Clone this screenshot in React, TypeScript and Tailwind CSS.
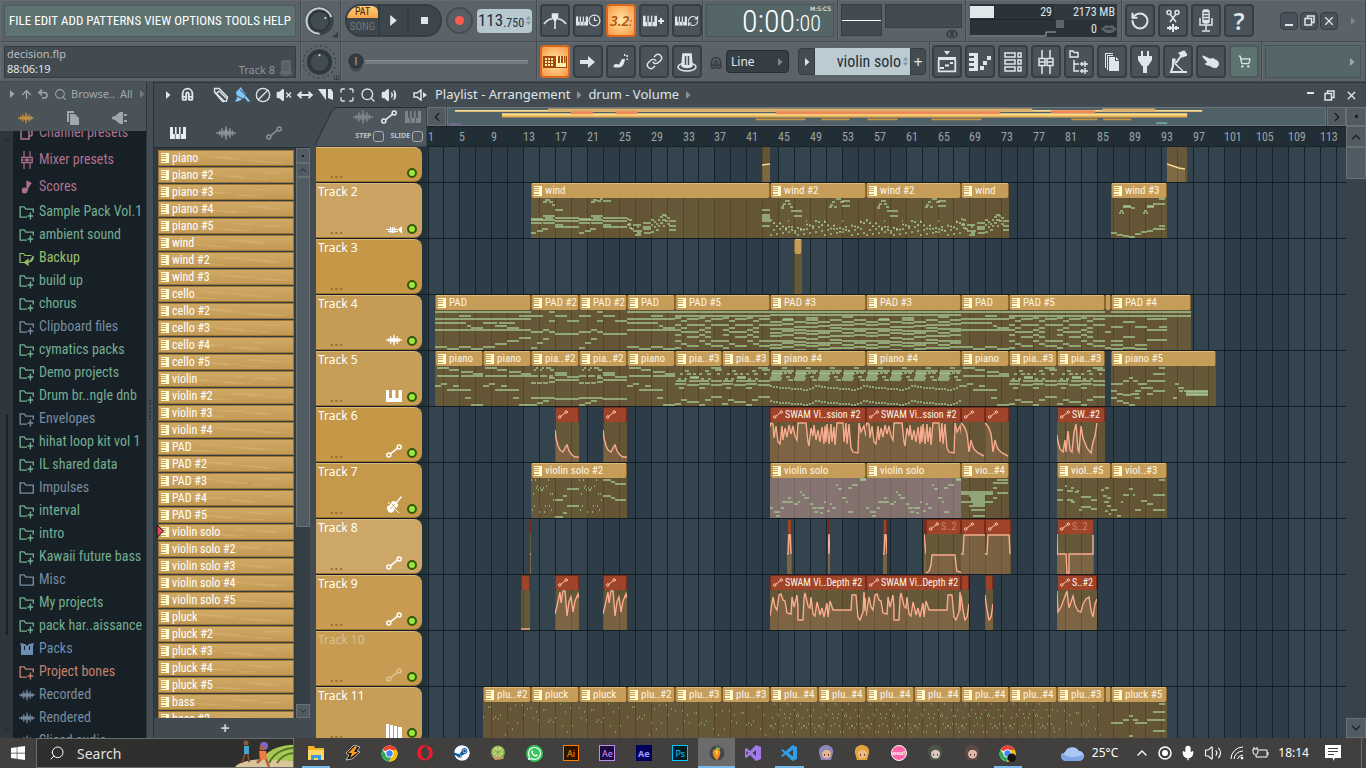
import React from "react";
import {
  Search, Magnet, Ban, Volume2, VolumeX, MoveHorizontal, Maximize, X, ChevronUp, ChevronDown, ChevronLeft, ChevronRight,
  ArrowUp, Undo2, Link, Mic, Eye, RotateCcw, ShoppingCart, Music2, RefreshCw, Clock3,
} from "lucide-react";
import { FaWindows, FaSteam, FaWhatsapp, FaOpera, FaHandPointRight } from "react-icons/fa";

const NARROW = "font-['Roboto_Condensed','Noto_Sans_Condensed','Open_Sans_Condensed',Lato,sans-serif]";

/* ---------- timeline scale ---------- */
const BAR = 255 / 32; // 32 bars are 255 px wide
const barX = (bar: number) => Math.floor(6 + (bar - 1) * BAR);

/* ---------- small drawings ---------- */
type P = { className?: string };

const Keys = ({ className = "w-4 h-3" }: P) => (
  <svg viewBox="0 0 16 12" className={className} fill="currentColor">
    <path d="M0 0H3V7H5V0H6.6V7H9V0H10.6V7H13V0H16V12H0Z" />
    <path d="M5.4 7V12M10.4 7V12" stroke="#3d464c" strokeWidth=".7" />
  </svg>
);
const Wave = ({ className = "w-5 h-3" }: P) => (
  <svg viewBox="0 0 20 14" className={className} fill="currentColor">
    <path d="M0 6.300h20v1.400H0z" />
    <path d="M2.500 7l1-2.500 1 2.500-1 2.500zM4.800 7l1.200-5 1.200 5L6 12zM7.200 7l.8-2.500.8 2.500-.8 2.500zM8.600 7L10 0l1.400 7L10 14zM11.200 7l.8-2.500.8 2.500-.8 2.500zM12.800 7L14 2l1.200 5L14 12zM15.500 7l1-2.500 1 2.500-1 2.500z" stroke="currentColor" strokeWidth=".6" />
  </svg>
);
const Auto = ({ className = "w-4 h-4" }: P) => (
  <svg viewBox="0 0 16 14" className={className} fill="none" stroke="currentColor" strokeWidth="1.5">
    <circle cx="2.8" cy="11" r="2" /><circle cx="13.2" cy="3" r="2" /><path d="M4.4 9.8L11.6 4.2" />
  </svg>
);
const RollIcon = ({ className = "w-2 h-2" }: P) => (
  <svg viewBox="0 0 8 10" className={className} shapeRendering="crispEdges" fill="#fffbd0">
    <path d="M0 0h8v10H0V9h5V8H0V6h5V5H0V4h5V3H0V2h5V1H0z" />
  </svg>
);
const Tri = ({ className = "" }: P) => (
  <svg viewBox="0 0 6 8" width="8" height="8" className={`shrink-0 ${className}`} fill="currentColor"><path d="M1 0l4.500 4L1 8z" /></svg>
);
const Spin = () => (
  <svg viewBox="0 0 5 9" className="ml-[2px] h-[9px] w-[5px] shrink-0" fill="#8296a0"><path d="M0 3.500L2.500 0 5 3.500zM0 5.500L2.500 9 5 5.500z" /></svg>
);
const FolderAdd = ({ plain }: { plain?: boolean }) => (
  <svg viewBox="0 0 14 14" className="h-4 w-4" fill="none" stroke="currentColor" strokeWidth="1.200">
    {plain ? <path d="M1 11.500V2.500h3.500l1.500 2h6.500v7z" /> : <path d="M7 11.500H1V2.500h3.500l1.500 2h6.500v3M10 7.500v6M7.500 10.500h5" />}
  </svg>
);
const MixerIcon = ({ className = "w-4 h-4" }: P) => (
  <svg viewBox="0 0 16 24" className={className} fill="none" stroke="currentColor" strokeWidth="1.500">
    <path d="M4 0v8M4 16v8M12 0v8M12 16v8M1 8.500h6v7H1zM9 8.500h6v7H9zM1 12h6M9 12h6" />
  </svg>
);
const Restore = () => (
  <svg viewBox="0 0 11 11" width="11" height="11" fill="none" stroke="currentColor" strokeWidth="1.500"><path d="M1 3.500h6.500V10H1zM3.500 3V1H10v6.500H8" /></svg>
);

/* ---------- top toolbar ---------- */
const btn = "flex h-[33px] w-[30px] shrink-0 items-center justify-center rounded-sm border-2";
function ToolButton({ label, lit, children }: { label: string; lit?: boolean; children: React.ReactNode }) {
  return (
    <button aria-label={label} className={`${btn} ${lit ? "border-[#d8681c] bg-radial from-[#ffe7a8] to-[#f7963f] text-[#b4550e]" : "border-[#363f46] bg-[#4a5359] text-[#dfe7ea]"}`}>
      {children}
    </button>
  );
}

function Knob({ ring }: { ring?: boolean }) {
  return (
    <svg viewBox="0 0 40 40" className="size-10" role="img" aria-label={ring ? "Main volume" : "Main pitch"}>
      {ring
        ? <><circle cx="19" cy="20" r="13.500" fill="#3a434a" stroke="#39424a" strokeWidth="2" /><path d="M19 33A13 13 0 1 1 31 16" fill="none" stroke="#c9d3d7" strokeWidth="2" /></>
        : <><circle cx="19" cy="20" r="16.500" fill="none" stroke="#353e44" strokeWidth="1.500" strokeDasharray="1.500 3.700" /><circle cx="19" cy="20" r="13" fill="#30393f" /></>}
      <circle cx="19" cy="20" r="10" fill="#414b52" stroke="#2c353b" strokeWidth="1.500" />
      <circle cx={ring ? 25 : 19} cy={ring ? 17 : 13} r="1" fill="#dfe7ea" />
      {ring ? <path d="M38 31v6h-6z" fill="#343c42" /> : <path d="M34 33v5h5M36.500 33v5M39 33v5" stroke="#343c42" fill="none" />}
    </svg>
  );
}

const cell = "flex items-center border-b border-r border-[#444d53] shadow-[inset_1px_1px_0_#646c72]";

function TopBar() {
  return (
    <header className="flex h-[82px] shrink-0 bg-[#5b6369] text-[#dfe7ea]">
      <div className="flex w-[301px] shrink-0 flex-col">
        <div className={`${cell} h-[42px] px-1`}>
          <nav className={`${NARROW} flex h-8 min-w-0 flex-1 items-center justify-between border border-[#4c5c5c] bg-[#5e7271] px-1 text-[13px] text-white`}>
            {["FILE", "EDIT", "ADD", "PATTERNS", "VIEW", "OPTIONS", "TOOLS", "HELP"].map((m) => <button key={m}>{m}</button>)}
          </nav>
        </div>
        <div className={`${cell} h-10 px-1`}>
          <div className="flex h-8 flex-1 items-center justify-between border border-[#343c43] bg-[#434b51] px-[2px] text-[11px] leading-[15px]">
            <div className="pb-[2px]"><div className="text-[#b6bdc0]">decision.flp</div><div>88:06:19</div></div>
            <div className="flex items-end self-end text-[#8d9599]">Track 8
              <svg viewBox="0 0 14 18" className="ml-1 h-[18px] w-[14px]"><ellipse cx="7" cy="14" rx="6.500" ry="3" fill="#5e666b" /><path d="M3 2h8v11H3z" fill="#596166" stroke="#6e767b" /></svg>
            </div>
          </div>
        </div>
      </div>
      <div className="flex w-10 shrink-0 flex-col">
        <div className={`${cell} h-[42px]`}><Knob ring /></div>
        <div className={`${cell} h-10`}><Knob /></div>
      </div>
      <div className="flex w-[196px] shrink-0 flex-col">
        <div className={`${cell} h-[42px] gap-1 pl-1`}>
          <div className="flex h-[33px] overflow-hidden rounded-l-2xl rounded-r-2xl border-2 border-[#353e45] bg-[#3d464c]">
            <div className={`${NARROW} flex w-[33px] flex-col border-r-2 border-[#343c43]`}>
              <button className="h-3 rounded-t-md bg-linear-to-b from-[#ffcf73] to-[#f9a548] text-[10px] leading-[12px] text-[#4a2305]">PAT</button>
              <button className="flex-1 text-[11px] leading-[16px] text-[#6d767b]">SONG</button>
            </div>
            <button aria-label="Play" className="flex w-[29px] items-center justify-center border-r-2 border-[#343c43]"><svg viewBox="0 0 6 10" width="7" height="11" fill="currentColor"><path d="M0 0l6 5-6 5z" /></svg></button>
            <button aria-label="Stop" className="flex w-[31px] items-center justify-center"><span className="size-[7px] bg-[#dfe7ea]" /></button>
          </div>
          <button aria-label="Record" className="flex size-[27px] items-center justify-center rounded-full border-2 border-[#444c52] bg-[#565e64]"><span className="size-[9px] rounded-full bg-[#ff5a50]" /></button>
          <div className={`${NARROW} flex h-6 w-[55px] items-center justify-center rounded-sm bg-[#b6c8d0] text-[17px] text-[#243038]`}>113<span className="pt-1 text-[12px]">.750</span><Spin /></div>
        </div>
        <div className={`${cell} relative h-10 px-2`}>
          <span className="ml-4 h-1 flex-1 border-t border-[#858d92] bg-[#747c81]" />
          <svg viewBox="0 0 16 20" className="absolute left-[7px] top-[11px] h-5 w-4" role="img" aria-label="Song position"><ellipse cx="8" cy="14" rx="6" ry="5" fill="#464e54" /><circle cx="8" cy="8" r="7" fill="#343c43" stroke="#252d33" /><path d="M8 4v8" stroke="#f7a55c" /></svg>
        </div>
      </div>
      <div className="flex min-w-0 flex-1 flex-col">
        <div className="flex h-[42px]">
          <div className={`${cell} w-[166px] shrink-0 gap-[3px] pl-[3px]`}>
            <ToolButton label="Metronome"><svg viewBox="0 0 24 18" className="h-[18px] w-6" fill="none" stroke="currentColor" strokeWidth="1.600"><path d="M1 12C4 8 7 7 9 7M15 7c2 0 5 1 8 5M12 3v14" /><path d="M9.500 2h5v4L12 8.500 9.500 6z" fill="currentColor" /></svg></ToolButton>
            <ToolButton label="Wait for input"><Keys className="h-3 w-3" /><Clock3 size={13} strokeWidth={2.200} /></ToolButton>
            <ToolButton label="Countdown" lit><span className="text-[14px] font-semibold italic">3.2<span className="text-[10px]">:</span></span></ToolButton>
            <ToolButton label="Overdub"><Keys className="h-3 w-[14px]" /><svg viewBox="0 0 8 8" width="8" height="8" stroke="currentColor" strokeWidth="2"><path d="M4 1v6M1 4h6" /></svg></ToolButton>
            <ToolButton label="Loop recording"><Keys className="h-3 w-3" /><RefreshCw size={12} strokeWidth={2.400} /></ToolButton>
          </div>
          <div className={`${cell} w-[135px] shrink-0 px-[3px]`}>
            <div className={`${NARROW} flex h-[33px] flex-1 items-center justify-end border border-[#465657] bg-[#546668] pr-[2px] text-white`}>
              <span className="text-[32px] font-light leading-8">0:00</span>
              <span className="flex flex-col"><span className="text-right font-['DejaVu_Sans'] text-[6px] leading-[7px]">M:S:CS</span><span className="pr-[10px] text-[22px] font-light leading-6">:00</span></span>
            </div>
          </div>
          <div className={`${cell} w-[128px] shrink-0 items-start gap-[3px] px-[3px] pt-1`}>
            <div className="flex h-8 w-[41px] items-center border border-[#363e45] bg-[#434b51]"><span className="h-px flex-1 bg-white" /></div>
            <div className="flex flex-1 flex-col items-end"><div className="h-6 w-full border border-[#363e45] bg-[#434b51]" /><Eye size={12} className="mr-1 text-[#343c42]" strokeWidth={3} /></div>
          </div>
          <div className={`${cell} w-[156px] shrink-0 px-1`}>
            <div className={`${NARROW} flex h-[33px] flex-1 flex-col bg-[#2b3238] text-[12px] leading-4`}>
              <div className="flex h-4 items-center border-b border-[#1f262b]"><span className="h-3 w-6 bg-[#dfe7ea]" /><span className="flex-1 pr-[2px] text-right">29</span><span className="w-[63px] bg-[#31383e] pr-[2px] text-right">2173 MB</span></div>
              <div className="flex flex-1 items-center">
                <svg viewBox="0 0 86 16" className="h-4 w-[86px]" fill="none"><path d="M0 15h76v-4h10" stroke="#a5adb1" /></svg>
                <span className="size-2 self-start bg-[#5c656b]" /><span className="flex-1 pr-1 text-right">0</span>
                <svg viewBox="0 0 16 10" className="h-[10px] w-4 fill-[#5c656b]"><path d="M0 5L5 1l3 1 3-1 5 4-5 4H5z" /><path d="M3 5c3-1.500 7-1.500 10 0-3 1-7 1-10 0z" fill="#2b3238" /></svg>
              </div>
            </div>
          </div>
          <div className={`${cell} min-w-0 flex-1 gap-[3px] pl-[3px]`}>
            <ToolButton label="Undo"><RotateCcw size={20} strokeWidth={2.400} /></ToolButton>
            <ToolButton label="Cut audio"><svg viewBox="0 0 16 24" className="h-6 w-4" fill="none" stroke="currentColor" strokeWidth="1.500"><circle cx="4" cy="3.500" r="2" /><circle cx="12" cy="3.500" r="2" /><path d="M5 5l6 8M11 5l-6 8" /><path d="M2 19h12M5 17v4M8 15v8M11 17v4" strokeWidth="2" /></svg></ToolButton>
            <ToolButton label="Record audio"><svg viewBox="0 0 14 24" className="h-6 w-[14px]" fill="none" stroke="currentColor" strokeWidth="1.500"><rect x="4" y="1" width="6" height="13" rx="2" fill="currentColor" /><path d="M4.500 4h5M4.500 7h5M4.500 10h5" stroke="#4a5359" /><path d="M1 9v7h12V9M7 16v5M3 22h8" /></svg></ToolButton>
            <ToolButton label="Help"><span className="text-[24px] font-semibold leading-none">?</span></ToolButton>
            <div className="flex-1" />
            <div className="flex shrink-0 gap-[2px]">
              {[<span key="m" className="mt-2 h-[2px] w-2 bg-current" />, <Restore key="r" />, <X key="x" size={14} />].map((c, i) => (
                <button key={i} aria-label={["Minimize", "Restore", "Close"][i]} className="flex size-[18px] items-center justify-center rounded-sm border border-[#363f46] bg-[#49525a]">{c}</button>
              ))}
            </div>
            <Tri className="ml-2 mr-2 text-[#7d868b]" />
          </div>
        </div>
        <div className="flex h-10">
          <div className={`${cell} w-[393px] shrink-0 gap-[3px] pl-[3px]`}>
            <ToolButton label="Typing keyboard" lit><svg viewBox="0 0 24 12" className="h-3 w-6"><path d="M0 0h12v12H0z" fill="#a14a0a" /><path d="M2 2h2v2H2zM5 2h2v2H5zM8 2h2v2H8zM2 5h2v2H2zM5 5h2v2H5zM8 5h2v2H8zM2 8h2v2H2zM5 8h2v2H5zM8 8h2v2H8z" fill="#ffe9a8" /><path d="M12 0h12v12H12z" fill="#a14a0a" /><path d="M13 0h2v7h2V0h1v7h2V0h1v7h1.500V0H23v11H13z" fill="#ffecae" /></svg></ToolButton>
            <ToolButton label="Step edit"><svg viewBox="0 0 16 12" className="h-3 w-4" fill="currentColor"><path d="M0 4h8V0l7 6-7 6V8H0z" /></svg></ToolButton>
            <ToolButton label="Note slide"><svg viewBox="0 0 16 16" className="h-4 w-4" fill="currentColor"><path d="M1 11c1-1.500 4-1 5-.5L9 5h3c-.5 4-2 8.500-6 8.500H2c-1.500 0-2-1.500-1-2.500zM11 0h1.500v2H11zM13.500 1H15v2h-1.500zM13.500 4.500H15v1.500h-1.500z" /></svg></ToolButton>
            <ToolButton label="Link"><Link size={17} /></ToolButton>
            <ToolButton label="Plugin"><svg viewBox="0 0 20 20" className="h-5 w-5" fill="none" stroke="currentColor" strokeWidth="1.500"><ellipse cx="10" cy="15" rx="9" ry="4" /><path d="M6 2h8l1 12c-2 2-8 2-10 0z" fill="currentColor" /><path d="M8.500 4v9M11.500 4v9" stroke="#4a5359" /></svg></ToolButton>
            <Magnet size={14} strokeWidth={3} className="mt-1 ml-1 shrink-0 rotate-[-45deg] text-[#384147]" />
            <button className="flex h-[23px] w-[63px] shrink-0 items-center justify-between rounded-sm border border-[#262e34] bg-[#363e45] px-1 text-[12px]">Line<Tri className="text-[#7d868b]" /></button>
            <div className="ml-[6px] flex h-[27px] items-stretch">
              <button aria-label="Pattern menu" className="flex w-[17px] items-center justify-center rounded-l-sm border border-[#343c43] bg-[#434c52]"><Tri /></button>
              <div className={`${NARROW} flex w-[95px] items-center justify-end whitespace-nowrap bg-[#bccbd2] pr-[2px] text-[16px] text-[#243038]`}>violin solo<Spin /></div>
              <button aria-label="Add pattern" className="flex w-4 items-center justify-center rounded-r-sm border border-[#343c43] bg-[#434c52] text-[16px] leading-none">+</button>
            </div>
          </div>
          <div className={`${cell} w-[332px] shrink-0 gap-[3px] pl-[2px]`}>
            <ToolButton label="Playlist"><svg viewBox="0 0 20 22" className="h-[22px] w-5" fill="currentColor"><path d="M7 0h6l-3 4zM1 6h18v3H1z" /><path d="M1.700 9v11.300h16.600V9M3 17h4M8 14.500h4M13 12h3" stroke="currentColor" strokeWidth="1.800" fill="none" /></svg></ToolButton>
            <ToolButton label="Piano roll"><svg viewBox="0 0 22 18" className="h-[18px] w-[22px]" fill="currentColor"><path d="M0 0h9v18H0v-3h5v-2H0v-3h5V8H0V5h5V3H0zM11 13h4v4h-4zM14 8h4v4h-4zM18 3h4v4h-4z" /></svg></ToolButton>
            <ToolButton label="Channel rack"><svg viewBox="0 0 18 20" className="h-5 w-[18px]" fill="none" stroke="currentColor" strokeWidth="1.500"><path d="M1 1h10v4H1zM1 8h10v4H1zM1 15h10v4H1zM14 1h3v4h-3zM14 8h3v4h-3zM14 15h3v4h-3z" /></svg></ToolButton>
            <ToolButton label="Mixer"><MixerIcon className="h-6 w-4" /></ToolButton>
            <ToolButton label="Browser"><svg viewBox="0 0 20 24" className="h-6 w-5" fill="none" stroke="currentColor" strokeWidth="1.500"><path d="M1 7V1h3l1 1.500h4V7zM5 10v11h5M5 14h5" /><path d="M11 14h8M13 12v4M16 11v6M11 21h8M13 19v4M16 18v6" /></svg></ToolButton>
            <ToolButton label="Project picker"><svg viewBox="0 0 14 18" className="h-[18px] w-[14px]" fill="currentColor"><path d="M0 0h8v1H1v14H0zM2 2h6v1H3v14H2zM4 4h6v4h4v10H4zM11 4l3 3h-3z" /></svg></ToolButton>
            <ToolButton label="Plugin picker"><svg viewBox="0 0 14 22" className="h-[22px] w-[14px]" fill="currentColor"><path d="M3 0h2v5h4V0h2v5h3v4l-4 6H9v7H5v-7H4L0 9V5h3z" /></svg></ToolButton>
            <ToolButton label="Performance"><svg viewBox="0 0 18 24" className="h-6 w-[18px]" fill="none" stroke="currentColor" strokeWidth="2"><path d="M4 10v6l-2 6h4M5 22h13M7 13l5-7" /><path d="M10 3l5-2 3 4-5 2zM3 9h3v5l8 7" fill="currentColor" strokeWidth="1.200" /></svg></ToolButton>
            <ToolButton label="Touch"><svg viewBox="0 0 20 16" width="18" height="15" fill="currentColor"><path d="M1 1l8 4 3-1 5 3c2 2 2 5 0 7-3 2-6 1-8-1l-5-1-.5-2L6 9 .5 3z" /><path d="M18 9c1 2 0 5-3 6" stroke="currentColor" fill="none" /></svg></ToolButton>
            <button aria-label="Shop" className="flex h-[33px] w-[30px] items-center justify-center rounded-sm border-2 border-[#4b5c5c] bg-[#5d7370]"><ShoppingCart size={13} strokeWidth={2.500} /></button>
          </div>
          <div className={`${cell} min-w-0 flex-1 pl-[3px] pr-1`}>
            <div className="flex h-[33px] flex-1 items-center justify-end border border-[#465657] bg-[#546668] pr-1"><Tri className="text-[#9eaaab]" /></div>
          </div>
        </div>
      </div>
    </header>
  );
}

/* ---------- browser ---------- */
const GREEN = "text-[#74ad92]", SLATE = "text-[#768ca0]", PINK = "text-[#b0718f]";
const browserItems: [string, string, string][] = [
  ["Sample Pack Vol.1", GREEN, "add"], ["ambient sound", GREEN, "add"], ["Backup", "text-[#98c06a]", "back"], ["build up", GREEN, "add"],
  ["chorus", GREEN, "add"], ["Clipboard files", SLATE, "add"], ["cymatics packs", GREEN, "add"], ["Demo projects", GREEN, "add"],
  ["Drum br..ngle dnb", GREEN, "add"], ["Envelopes", SLATE, "add"], ["hihat loop kit vol 1", GREEN, "add"], ["IL shared data", GREEN, "add"],
  ["Impulses", SLATE, "plain"], ["interval", GREEN, "add"], ["intro", GREEN, "add"], ["Kawaii future bass", GREEN, "add"], ["Misc", SLATE, "plain"],
  ["My projects", GREEN, "add"], ["pack har..aissance", GREEN, "add"], ["Packs", "text-[#6d8fb5]", "packs"], ["Project bones", "text-[#c4826c]", "add"],
  ["Recorded", SLATE, "wave"], ["Rendered", SLATE, "wave"], ["Sliced audio", SLATE, "wave"],
];

function BrowserIcon({ kind }: { kind: string }) {
  if (kind === "wave") return <Wave className="h-3 w-4" />;
  if (kind === "packs") return <svg viewBox="0 0 14 12" className="h-3 w-4" fill="currentColor"><path d="M0 0l5 1 2 2 2-2 5-1-1 3v9H1V3z" /><path d="M4.500 3v4M9.500 3v4" stroke="#172026" /></svg>;
  if (kind === "back") return <svg viewBox="0 0 16 14" className="h-4 w-4" fill="none" stroke="currentColor" strokeWidth="1.200"><path d="M5 11.500H1V2.500h3.500l1.500 2h6.500" /><path d="M14 5c1 4-2 6-5 6V8.500L5.500 11.500 9 14v-2" fill="currentColor" /></svg>;
  return <FolderAdd plain={kind === "plain"} />;
}

function Browser() {
  return (
    <aside className="flex w-[146px] shrink-0 flex-col overflow-hidden bg-[#2e373d]">
      <div className="h-[49px] shrink-0 bg-[#4a5358] text-[#a0a8ac]">
        <div className="flex h-6 items-center gap-[5px] pl-2 text-[11px]">
          <Tri /><ArrowUp size={13} strokeWidth={2.500} className="-mx-px" /><Undo2 size={12} strokeWidth={3} /><Search size={13} className="-mr-px" /><span>Browse..</span><span>All</span><Tri className="text-[#737b80]" />
        </div>
        <div className="flex h-6 items-center justify-between px-[18px]">
          <Wave className="h-3 w-4 text-[#c3923f]" />
          <svg viewBox="0 0 12 14" className="h-[14px] w-3" fill="currentColor"><path d="M0 0h7v2H2v9H0zM3 3h5l4 4v7H3z" /></svg>
          <svg viewBox="0 0 16 12" className="h-3 w-4" fill="currentColor"><path d="M0 5l3-1 5-4h3v12H8L3 8 0 7zM12 2h3v2h-3zM12 8h3v2h-3z" /></svg>
        </div>
      </div>
      <div className="flex min-h-0 flex-1 overflow-hidden">
        <div className="flex w-[13px] shrink-0 flex-col items-center justify-between py-1 text-[#161d22]"><ChevronUp size={10} /><span className="mt-[180px] h-[220px] w-[2px] bg-[#182027]" /><ChevronDown size={10} /></div>
        <ul className={`${NARROW} -mt-3 min-w-0 flex-1 whitespace-nowrap bg-[#172026] pl-[6px] text-[14px]`}>
          {([["Channel presets", 0], ["Mixer presets", 1], ["Scores", 2]] as [string, number][]).map(([t, k]) => (
            <li key={t} className={`flex h-[27px] items-center gap-1 ${PINK}`}>
              <span className="flex w-4 justify-center">{k === 0 ? <svg viewBox="0 0 14 14" className="h-[14px] w-[14px]" fill="none" stroke="currentColor" strokeWidth="1.500"><path d="M1 4h8v9H1zM4 4V1h8v8l-3 2" /></svg> : k === 1 ? <MixerIcon className="h-[18px] w-3" /> : <Music2 size={14} fill="currentColor" />}</span>{t}
            </li>
          ))}
          {browserItems.map(([t, c, k]) => (
            <li key={t} className={`flex h-[23px] items-center gap-1 ${c}`}><span className="flex w-4 shrink-0 justify-center"><BrowserIcon kind={k} /></span>{t}</li>
          ))}
        </ul>
      </div>
    </aside>
  );
}

/* ---------- pattern picker ---------- */
const group = (n: string, c: number) => Array.from({ length: c }, (_, i) => (i ? `${n} #${i + 1}` : n));
const patterns = [...group("piano", 5), ...group("wind", 3), ...group("cello", 5), ...group("violin", 4), ...group("PAD", 5), ...group("violin solo", 5), ...group("pluck", 5), ...group("bass", 2)];

function Picker() {
  return (
    <section className="flex w-[162px] shrink-0 flex-col bg-[#434b52]">
      <div className="flex h-10 shrink-0 items-center gap-[30px] pl-4 pt-3 text-[#8a9398]">
        <Keys className="h-3 w-4 text-[#e6eef2]" /><Wave className="h-[14px] w-5" /><Auto className="h-4 w-4" />
      </div>
      <div className="mr-[6px] flex min-h-0 flex-1 border-t border-[#252e35] bg-[#323b42]">
        <ul className="min-w-0 flex-1 overflow-hidden pl-1 pr-[2px] pt-[2px]">
          {patterns.map((p, i) => (
            <li key={p} className="relative mb-px flex h-4 items-center gap-[3px] border border-[#9c7637] bg-linear-to-b from-[#d0a966] to-[#c29a54] pl-[2px]">
              {p === "violin solo" && <svg viewBox="0 0 8 12" className="absolute -left-[3px] top-0 h-3 w-2"><path d="M1 0l6.500 6L1 12z" fill="#e8475d" stroke="#111" /></svg>}
              <RollIcon className="h-[10px] w-2" />
              <svg viewBox="0 0 120 12" preserveAspectRatio="none" className="absolute right-1 top-1 h-2 w-[118px] opacity-35" stroke="#e6c68a" strokeWidth="1.500" aria-hidden="true">
                <path d={Array.from({ length: 9 }, (_, k) => `M${20 + ((k * 37 + i * 13) % 80)} ${1 + ((k * 5 + i * 3) % 11)}h${6 + ((k * 7 + i) % 18)}`).join("")} />
              </svg>
              <span className={`${NARROW} relative text-[12px] leading-[14px] text-white`}>{p}</span>
            </li>
          ))}
        </ul>
        <div className="flex w-[14px] shrink-0 flex-col bg-[#363f46] text-[#171e24]">
          <span className="flex h-[15px] items-center justify-center border border-[#687077] bg-[#525b62]"><span className="size-[2px] bg-current" /></span>
          <button aria-label="Scroll patterns up" className="flex h-[14px] items-center justify-center border border-[#687077] bg-[#525b62]"><ChevronUp size={10} /></button>
          <span className="h-[350px] border border-[#687077] bg-[#525b62]" />
          <span className="flex-1" />
          <button aria-label="Scroll patterns down" className="flex h-[14px] items-center justify-center border border-[#687077] bg-[#525b62]"><ChevronDown size={10} /></button>
        </div>
      </div>
      <button aria-label="New pattern" className="h-5 shrink-0 pr-5 text-[16px] font-bold leading-5 text-[#c6ced2]">+</button>
    </section>
  );
}

/* ---------- note data: x,y,width in clip pixels ---------- */
type Note = [number, number, number];
const parse = (s: string): Note[] => s.split(" ").map((t) => t.split(",").map(Number) as Note);
const shift = (n: Note[], d: number) => n.map(([x, y, w]) => [x + d, y, w] as Note);
const tile = (n: Note[], step: number, c: number) => Array.from({ length: c }, (_, i) => shift(n, i * step)).flat();

const windHead = parse("0,21,12 0,25,11 12,18,12 14,20,8 12,25,12 0,22,24 24,20,24 24,27,8 24,23,24 24,29,24 11,31,6 6,33,6 0,35,5");
const windRun: Note[] = parse("0,21,2 2,22,3 1,26,3 0,27,4 2,30,3 4,31,3 6,27,8 6,33,9 8,37,6 10,29,2 10,35,4 16,25,8 16,29,8 16,31,8 17,35,7 24,22,3 24,27,2 24,34,3 27,29,2 27,24,2 29,26,2 29,32,3 31,22,2 31,28,2 33,19,3 33,25,3 35,17,4 35,22,4 36,28,2 38,18,2 38,23,3 40,20,3 40,26,3 42,23,7 42,28,7 42,32,7");
const zig: Note[] = Array.from({ length: 32 }, (_, i): Note[] => {
  const d = Math.abs((i % 16) - 8);
  return [[i * 3, 31 - (d * 9) / 8 + (i % 3) * 2, 2], [i * 3, 37 - ((i * 5) % 9), 2], ...(i % 6 === 0 ? [[i * 3, 23, 1] as Note] : [])];
}).flat();
const pad5 = tile(parse("0,8,6 6,11,6 12,9,12 24,8,6 30,11,6 36,9,12 0,15,6 12,15,12 24,15,6 36,15,12 6,18,6 30,18,6 0,20,6 24,20,6 6,22,18 30,22,6 0,25,6 30,27,6 24,25,6 12,27,12 0,31,6 24,31,6 36,31,12 6,34,6 12,36,12 30,34,6 36,36,12 0,38,6"), 48, 2).concat(parse("0,2,96 0,6,96"));
const pad3: Note[] = Array.from({ length: 8 }, (_, c) => [12, 15, 19, 23, 26, 31, 35, 38].map((y, k) => [c * 12, y - (c % 2) * 2 + ((c * k) % 3), 12] as Note)).flat().concat(parse("0,2,96 0,5,96 13,9,10 72,7,11 36,8,12"));
const wave4 = [0, 1, 1, 2, 2, 2, 2, 3, 3, 3, 3, 4, 4, 3, 2, 0];
const piano4: Note[] = tile(parse("2,5,22 12,2,5 1,7,11 2,8,11 1,10,10 0,12,12 0,14,11 14,7,3 18,7,4 16,11,4 18,14,5"), 24, 4)
  .concat(Array.from({ length: 32 }, (_, i): Note[] => [[i * 3, 20 + wave4[i % 16], 2], [i * 3, 35 + wave4[i % 16], 2]]).flat());
const pluckDots = (seed: number, dense: number): Note[] => Array.from({ length: dense }, (_, i) => [(i * 17 + seed * 7) % 46, 2 + ((i * i * 5 + i * 11 + seed * 3) % 34), 1] as Note);

const NOTES: Record<string, Note[]> = {
  wind: [...windHead, ...shift(windHead, 48), ...shift(windRun, 96), ...parse("12,4,4 14,2,5 18,4,4 21,7,3 24,12,8 60,4,4 62,2,4 66,3,4 69,1,3 72,3,8 231,12,8 231,17,8 231,19,8 231,21,8 231,23,8 231,28,8")],
  "wind #2": [...zig, ...parse("11,10,3 13,6,3 12,8,2 15,3,5 18,6,3 20,9,3 21,13,11 24,18,8 59,9,3 60,7,3 62,4,3 66,1,5 64,9,3 70,4,4 72,3,8 72,8,8")],
  windEnd: windRun,
  "wind #3": parse("12,8,8 12,9,8 20,10,4 36,8,7 36,9,7 42,6,12 48,1,6 8,15,2 9,13,3 11,15,2 32,15,2 33,13,3 35,15,2 0,35,6 6,37,6 12,38,6 18,39,6 24,36,6 30,34,6 36,33,6 42,31,12 48,28,6"),
  PAD: parse("0,2,96 24,6,12 84,6,12 0,9,96 0,13,31 48,13,14 64,13,16 32,16,4 60,16,12 36,18,12 72,18,12 0,20,96 84,28,12 72,31,12 60,34,12 0,37,12 24,37,12 48,37,12 12,39,12 36,39,12"),
  padShort: parse("0,2,48 24,6,12 0,9,48 0,13,31 32,16,4 36,18,12 0,20,48 0,37,12 24,37,12 12,39,12 36,39,12"),
  "PAD #2": parse("0,6,12 18,2,6 24,6,12 18,11,6 36,11,12 0,22,12 12,20,6 18,22,6 24,24,24 12,29,6 6,33,6 0,38,6"),
  "PAD #5": pad5,
  "PAD #3": pad3,
  "PAD #4": parse("0,2,80 0,6,80 36,9,20 12,12,12 0,17,12 24,17,12 48,17,8 36,20,20 12,27,12 0,31,12 36,30,20 0,35,12 24,35,12 0,39,12 12,38,12 24,39,12"),
  piano: parse("2,2,12 14,4,10 26,6,12 38,8,10 2,10,22 26,10,22 6,18,6 0,20,6 18,20,6 12,24,12 24,24,12 30,32,6 36,39,12"),
  "piano #2": parse("3,4,2 5,2,2 9,4,2 11,2,2 15,2,5 19,4,4 0,10,7 9,10,7 18,10,4 24,7,12 24,9,12 36,11,12 18,12,6 24,14,24 0,17,5 6,17,5 12,17,5 18,16,6 0,32,24 24,33,24 12,35,6 6,37,6 0,39,6"),
  "piano #3": parse("36,2,10 40,4,8 10,5,4 30,5,4 5,8,3 12,8,4 18,8,3 24,8,3 32,8,4 42,8,3 15,11,9 15,12,9 3,13,3 9,13,3 26,13,3 33,13,3 1,15,10 14,15,10 24,15,10 36,15,12 0,18,11 12,19,12 24,18,11 36,19,12 4,22,5 24,22,6 36,31,12 6,34,6 12,36,12 30,34,6 0,38,6 24,39,6"),
  "piano #4": piano4,
  "piano #5": parse("18,12,4 12,15,6 22,15,5 0,18,12 27,18,9 36,15,18 42,8,12 48,2,6 30,22,12 0,25,6 6,28,6 12,29,8 20,28,8 24,25,6 42,25,12 36,28,6 0,32,6 6,35,6 12,37,6 18,39,6 24,32,5 64,18,4 67,22,6 68,25,4 73,25,24 75,26,22 75,28,22 75,29,22 62,32,4"),
  "violin solo": parse("0,30,3 4,34,6 6,38,4 11,30,3 12,24,5 18,20,3 17,24,6 24,26,4 30,14,2 32,17,3 34,20,5 28,24,2 40,26,3 42,30,5 44,34,4 48,30,6 50,35,3 54,24,2 57,33,3 60,26,2 62,30,4 66,7,2 68,11,4 72,20,4 76,24,2 78,10,4 82,7,6 78,34,5 90,1,6 90,2,6"),
  "violin solo #2": [...Array.from({ length: 22 }, (_, i) => [((i * 7) % 23), 2 + ((i * i * 3 + i * 7) % 34), 1] as Note), ...Array.from({ length: 22 }, (_, i) => [48 + ((i * 7) % 23), 2 + ((i * i * 3 + i * 7) % 34), 1] as Note), ...parse("24,22,8 32,18,4 36,11,12 24,39,8 32,35,4 36,28,12 72,2,8 80,4,4 84,6,11 72,18,8 80,20,4 84,22,11")],
  "violin solo #4": parse("0,14,32 0,16,32 8,18,16 10,20,14 10,22,14 0,24,32 12,26,12 8,28,16 10,32,14 12,38,12 32,10,4 36,2,11 32,5,15 36,15,11 32,20,4"),
  "violin solo #5": parse("0,12,6 8,8,2 10,13,6 14,10,3 18,14,3 0,22,6 10,22,6 14,24,4 20,13,2 24,19,10 34,22,6 24,29,10 34,31,6 22,32,3 44,12,3 48,10,4 46,18,4 50,20,4 47,24,5 50,28,4 48,33,3 52,36,2"),
  "violin solo #3": parse("18,11,4 12,17,6 22,17,2 42,17,12 30,23,6 36,26,6 10,24,2 0,32,6 24,32,6 42,32,12 6,38,4 48,2,6"),
  "pluck #5": parse("48,2,6 42,10,12 18,14,4 12,18,6 22,18,5 0,21,12 24,21,12 36,18,18 42,29,12 18,34,4"),
};

/* ---------- curves ---------- */
const EXPR = "0,5 1,1 3,2 4,16 6,4 8,20 10,22 12,4 13,18 15,6 17,15 19,3 21,12 23,4 25,14 27,18 28,1 36,1 38,20 39,24 41,6 43,14 44,3 46,18 48,8 50,20 52,5 54,22 55,4 56,20 57,2 59,22 61,2 62,20 64,5 65,23 67,1 73,1 74,20 76,1 77,22 79,2 81,26 83,30 88,31 89,1 91,10 94,4 96,14";
const DEPTH = "0,26 3,7 5,17 7,20 9,5 11,4 13,10 15,11 17,23 21,24 22,7 24,17 27,5 28,17 28,30 33,30 34,8 35,3 38,16 40,18 41,7 43,24 45,26 47,12 49,20 50,25 52,18 54,27 57,13 58,27 60,11 63,20 81,20 82,5 86,5 88,27 90,30 93,22 94,2 95,21 96,8";
const FALL = "0,8 1,16 3,24 5,28 8,30 11,24 12,23 14,29 17,33 20,35 24,35";
const DROP = "0,1 2,3 4,6 6,12 7,20 8,30 10,18 11,22 13,27 17,31 23,34";
const BUZZ = "0,24 2,16 5,2 6,13 8,1 10,1 11,13 12,26 14,12 16,7 17,14 18,22 20,11 23,4 24,8";

type Kind = "gold" | "red" | "plain" | "sel";
type ClipData = { from: number; to: number; name?: string; notes?: string; kind?: Kind; curve?: string; dim?: boolean; dots?: number };

function Clip({ c, h = 40 }: { c: ClipData; h?: number }) {
  const left = barX(c.from), width = Math.max(1, barX(c.to) - left);
  const kind = c.kind ?? "gold";
  const red = kind === "red";
  const notes = c.dots !== undefined ? pluckDots(c.dots, c.name?.includes("#4") ? 40 : 16) : NOTES[c.notes ?? c.name ?? ""];
  return (
    <div className="absolute top-0 flex h-full flex-col overflow-hidden" style={{ left, width }}>
      {kind !== "plain" && (
        <div className={`flex h-[15px] shrink-0 items-center overflow-hidden rounded-xs border-x border-t pb-px ${width > 12 ? "pl-[2px]" : ""} ${red ? "gap-[2px] border-[#7a2c19] bg-[#9f442a] text-[10px]" : "gap-[3px] border-[#8a672e] border-t-[#e3b873] bg-[#c59d58] text-[11px]"}`}>
          {width > 12 && (red
            ? <Auto className="h-[9px] w-[10px] shrink-0 text-[#ffd3bd]" />
            : <RollIcon className="h-[10px] w-2 shrink-0" />)}
          {c.name && <span className={`${NARROW} whitespace-nowrap leading-[13px] ${c.dim ? "text-[#c78972]" : "text-[#fdf4e4]"}`}>{c.name}</span>}
        </div>
      )}
      <svg viewBox={`0 0 ${width} ${h}`} preserveAspectRatio="none" className={`w-full flex-1 ${kind === "sel" ? "bg-[#bd9588]/60" : "bg-[#b57b1e]/40"}`} aria-hidden="true">
        {notes && <path d={notes.map(([x, y, w]) => `M${x} ${y}h${w}`).join("")} stroke={c.dots !== undefined ? "#8ea274" : "#a3c08d"} strokeWidth={c.dots !== undefined ? 1.5 : 1.6} fill="none" />}
        {c.curve && <>
          <polygon points={`0,${h} ${c.curve} ${c.curve.split(" ").pop()!.split(",")[0]},${h}`} fill={red ? "#f0a080" : "#ffd080"} opacity=".16" />
          <polyline points={c.curve} fill="none" stroke={red ? "#f9ab8d" : "#ffd694"} strokeWidth="1.4" />
        </>}
      </svg>
    </div>
  );
}

const run = (name: string, edges: number[], extra: Partial<ClipData> = {}): ClipData[] => edges.slice(1).map((to, i) => ({ from: edges[i], to, name, ...extra }));
const pia = (label: string, notes: string, edges: number[]) => run(label, edges, { notes });
const red = (from: number, to: number, curve: string, name?: string, dim?: boolean): ClipData => ({ from, to, curve, name, dim, kind: "red" });

type Track = { name: string; icon?: "wind" | "wave" | "keys" | "auto" | "violin" | "pluck"; tone: string; off?: boolean; clips: ClipData[] };
const tracks: Track[] = [
  { name: "Track 2", icon: "wind", tone: "bg-[#cba362]", clips: [
    ...run("wind", [14, 44]), ...run("wind #2", [44, 56, 68]), ...run("wind", [68, 74], { notes: "windEnd" }), { from: 86.75, to: 93.75, name: "wind #3" }] },
  { name: "Track 3", tone: "bg-[#c59848]", clips: [{ from: 47, to: 48 }] },
  { name: "Track 4", icon: "wave", tone: "bg-[#c49c56]", clips: [
    ...run("PAD", [2, 14]), ...run("PAD #2", [14, 20, 26]), ...run("PAD", [26, 32], { notes: "padShort" }), ...run("PAD #5", [32, 44]), ...run("PAD #3", [44, 56, 68]),
    ...run("PAD", [68, 74], { notes: "padShort" }), ...run("PAD #5", [74, 86]), { from: 86, to: 86.75, notes: "PAD #2" }, ...run("PAD #4", [86.75, 96.75])] },
  { name: "Track 5", icon: "keys", tone: "bg-[#c79e58]", clips: [
    ...run("piano", [2, 8, 14]), ...pia("pia..#2", "piano #2", [14, 20, 26]), ...run("piano", [26, 32]), ...pia("pia..#3", "piano #3", [32, 38, 44]),
    ...run("piano #4", [44, 56, 68]), ...run("piano", [68, 74]), ...pia("pia..#3", "piano #3", [74, 80, 86]), ...run("piano #5", [86.75, 100])] },
  { name: "Track 6", icon: "auto", tone: "bg-[#c59848]", clips: [
    red(17, 20, FALL), red(23, 26, FALL), red(44, 56, EXPR, "SWAM Vi..ssion #2"), red(56, 68, EXPR, "SWAM Vi..ssion #2"), red(68, 71, DROP), red(71, 74, DROP),
    red(80, 86, "0,13 1,20 3,27 6,30 8,18 9,30 11,9 13,28 15,30 17,10 19,2 21,28 22,30 24,4 26,16 30,26 34,31 36,20 38,14 40,1", "SW..#2")] },
  { name: "Track 7", icon: "violin", tone: "bg-[#c5994c]", clips: [
    ...run("violin solo #2", [14, 26]), ...run("violin solo", [44, 56, 68], { kind: "sel" }), ...pia("vio..#4", "violin solo #4", [68, 74]),
    ...pia("viol..#5", "violin solo #5", [80, 86.75]), ...pia("viol..#3", "violin solo #3", [86.75, 93.75])] },
  { name: "Track 8", icon: "auto", tone: "bg-[#cda768]", clips: [
    red(13.8, 13.9, "0,20 1,20"), red(46.1, 46.7, "0,20 1,20 2,0 3,0 4,20"), red(51.25, 51.5, "0,20 1,0 2,20"), red(58.2, 58.7, "0,20 1,20 2,0 3,0 4,20"), red(63.25, 63.5, "0,0 2,20"),
    red(63.5, 68, "0,39 3,37 5,31 6,21 29,21 30,31 31,37 36,39", "S..2", true), red(68, 71, "0,20 2,20 3,1 24,1"), red(71, 74.25, "0,20 2,20 3,1 24,1 25,20"),
    red(80, 84.6, "0,0 0.500,20 9,20 10,39 12,39 12,20 36,20 36,1", "S..2", true)] },
  { name: "Track 9", icon: "auto", tone: "bg-[#c79c52]", clips: [
    red(12.75, 13.9, "0,39 9,39"), red(17, 20, BUZZ), red(23, 26, BUZZ), red(44, 56, DEPTH, "SWAM Vi..Depth #2"), red(56, 68, DEPTH, "SWAM Vi..Depth #2"),
    red(68, 69, "0,5 2,20 4,30 6,27 8,14"), red(71, 72, "0,5 2,20 4,30 6,27 8,14"), red(80, 85, "0,1 1,22 4,17 7,9 10,1 12,18 16,6 18,15 21,21 24,22 26,14 29,9 32,7 34,20 36,27 38,14 40,9", "S..#2")] },
  { name: "Track 10", icon: "auto", tone: "bg-[#c79c52]", off: true, clips: [] },
  { name: "Track 11", icon: "pluck", tone: "bg-[#c79e58]", clips: [
    ...run("plu..#2", [8, 14], { dots: 1 }), ...run("pluck", [14, 20, 26], { dots: 2 }), ...run("plu..#2", [26, 32], { dots: 1 }), ...run("plu..#3", [32, 38, 44], { dots: 3 }),
    ...run("plu..#4", [44, 50, 56, 62, 68, 74, 80], { dots: 4 }), ...run("plu..#3", [80, 86], { dots: 3 }), { from: 86, to: 86.75 }, ...run("pluck #5", [86.75, 93.75])] },
];

function TrackIcon({ icon }: { icon?: Track["icon"] }) {
  if (icon === "wave") return <Wave className="h-3 w-4" />;
  if (icon === "keys") return <svg viewBox="0 0 16 12" className="h-3 w-4" fill="currentColor"><path d="M0 0H3V8H6V0H9.500V8H12.500V0H16V12H0Z" /></svg>;
  if (icon === "auto") return <Auto className="h-[14px] w-4" />;
  if (icon === "wind") return <svg viewBox="0 0 16 8" className="h-2 w-4" fill="none" stroke="currentColor"><path d="M0 3.500h15M4.500 1v6M6.500 1v6M8.500 1v6M2 5.500h10" strokeWidth="1.200" /><path d="M12 3.500l4-3.500v8z" fill="currentColor" stroke="none" /></svg>;
  if (icon === "violin") return <svg viewBox="0 0 16 18" className="h-[18px] w-4" fill="currentColor"><path d="M1 11c1-2 3-1 4-3 0-3 3-4 5-2l5-6 1 1-5 6c2 2 1 4-1 5-2 0-1 2-3 4-3 2-6 0-6-5z" /><path d="M2 6l11 11" stroke="currentColor" /><path d="M4 13l5-5M6 8l4 4" stroke="#c5994c" strokeWidth=".8" /></svg>;
  if (icon === "pluck") return <svg viewBox="0 0 16 14" className="h-[14px] w-4" fill="currentColor"><path d="M0 0h3v14H0zM4 1h3v13H4zM8 2h3v12H8zM12 3h4v11h-4z" /></svg>;
  return null;
}

function TrackHead({ t }: { t: Track }) {
  return (
    <div className={`flex h-full w-[106px] shrink-0 flex-col justify-between rounded-r-lg border-b border-t border-b-[#9b7431] border-t-[#dbb47a] ${t.tone} pl-[2px] text-white`}>
      <span className={`text-[12px] leading-[15px] ${t.off ? "opacity-35" : ""}`}>{t.name}</span>
      <div className="flex items-end justify-end pb-[3px] pr-[5px]">
        <span className="mr-auto pl-3 text-[12px] font-bold leading-[8px] tracking-widest text-[#8f6a2a]">...</span>
        <span className={`mr-[5px] ${t.off ? "opacity-40" : ""}`}><TrackIcon icon={t.icon} /></span>
        <button aria-label={`Mute ${t.name || "Track 1"}`} className="size-[10px] rounded-full border-2 border-[#355808] bg-[#9be83c]" />
      </div>
    </div>
  );
}

/* ---------- playlist ---------- */
const overview: [string, string, number][] = [
  ["M7 3H755", "#ffd98a", 2], ["M54 7H740", "#ffdc8c", 3], ["M100 2H585", "#dcb066", 3], ["M54 9H740", "#e6ae52", 2], ["M328 5H553", "#ee8a58", 3], ["M123 5H145M168 5H190", "#ee8a58", 3],
  ["M655 2H708", "#dcb066", 3], ["M604 4H648", "#ee8a58", 3], ["M308 12H358M374 12H402M420 12H450M484 12H534M624 12H650M656 12H684", "#c5933f", 2], ["M1 17H13", "#8a6fc0", 1], ["M709 16H720", "#6fa39f", 2],
];

function Playlist() {
  return (
    <section className="flex min-w-0 flex-1 flex-col bg-[#434b52]">
      <div className="flex h-10 shrink-0">
        <div className="relative w-[111px] shrink-0">
          <svg viewBox="0 0 111 40" className="absolute inset-0 h-full w-full" aria-hidden="true"><path d="M0 40V36L16 4Q18 .500 22 .500H111V40z" fill="#4e575e" stroke="#252e35" /></svg>
          <div className="relative flex h-[19px] items-center justify-end gap-2 pr-[6px] text-[#7d868b]"><Wave className="h-[14px] w-5" /><Auto className="h-[14px] w-4 text-[#e6eef2]" /><Keys className="h-3 w-4" /></div>
          <div className="relative flex h-5 items-center justify-end gap-[2px] pr-1 text-[7px] font-bold text-[#bcc4c8]">
            <label className="flex items-center gap-[2px]">STEP<input type="checkbox" className="size-[11px] appearance-none rounded-[3px] border border-[#a6aeb2]" /></label>
            <label className="ml-1 flex items-center gap-[2px]">SLIDE<input type="checkbox" className="size-[11px] appearance-none rounded-[3px] border border-[#a6aeb2]" /></label>
          </div>
        </div>
        <div className="flex min-w-0 flex-1 flex-col">
          <div className="flex h-[19px] shrink-0 text-[#1b2329]">
            <button aria-label="Scroll left" className="flex w-[19px] items-center justify-center border border-[#697178] bg-[#525b62]"><ChevronLeft size={14} strokeWidth={2.5} /></button>
            <div className="ml-px flex-1 border border-[#6b757b] bg-[#51616a]">
              <svg viewBox="0 0 878 18" preserveAspectRatio="none" className="h-full w-full" aria-label="Arrangement overview" role="img">{overview.map(([d, c, w]) => <path key={d} d={d} stroke={c} strokeWidth={w} />)}</svg>
            </div>
            <button aria-label="Scroll right" className="ml-px flex w-[19px] items-center justify-center border border-[#697178] bg-[#525b62]"><ChevronRight size={14} strokeWidth={2.5} /></button>
          </div>
          <div className={`${NARROW} relative h-[21px] shrink-0 overflow-hidden border-y border-[#1a2329] bg-[#222e35] text-[12px] leading-5 text-[#98a3a9]`}>
            {Array.from({ length: 29 }, (_, i) => <span key={i} className="absolute top-0" style={{ left: barX(1 + i * 4) - 5 }}>{1 + i * 4}</span>)}
          </div>
        </div>
        <div className="flex w-5 shrink-0 flex-col text-[#1b2329]">
          <span className="flex h-[19px] items-center justify-center border border-[#697178] bg-[#525b62]"><span className="size-[3px] bg-current" /></span>
          <button aria-label="Scroll up" className="flex flex-1 items-center justify-center border border-[#697178] bg-[#525b62]"><ChevronUp size={14} strokeWidth={2.5} /></button>
        </div>
      </div>
      <div className="flex min-h-0 flex-1">
        <div className="relative flex min-w-0 flex-1 flex-col overflow-hidden bg-[#24313a]">
          <div className="absolute inset-y-0 left-[106px] right-0 overflow-hidden bg-[#2e3e48]" aria-hidden="true">
            <span className="absolute inset-y-0 left-0 w-[5px] bg-[#24323b]" />
            {Array.from({ length: 80 }, (_, i) => (
              <span key={i} className={`absolute inset-y-0 w-4 border-l border-[#14222a] ${(i + 2) % 8 < 4 ? "bg-[#33444e]" : "bg-[#2d3c46]"}`} style={{ left: barX(1 + i * 2) }} />
            ))}
          </div>
          <div className="relative flex h-9 shrink-0 border-b border-[#111e26]">
            <TrackHead t={{ name: "", tone: "bg-[#c59848]", clips: [] }} />
            <div className="relative flex-1 overflow-hidden">
              <Clip h={35} c={{ from: 43, to: 44, kind: "plain", curve: "0,18 8,17" }} />
              <Clip h={35} c={{ from: 93.75, to: 96.25, kind: "plain", curve: "0,17 6,19 12,21 18,22" }} />
            </div>
          </div>
          {tracks.map((t) => (
            <div key={t.name} className="relative flex h-14 shrink-0 border-b border-[#111e26]">
              <TrackHead t={t} />
              <div className="relative flex-1 overflow-hidden">{t.clips.map((c, i) => <Clip key={i} c={c} />)}</div>
            </div>
          ))}
        </div>
        <div className="flex w-5 shrink-0 flex-col bg-[#3a4249] text-[#1b2329]">
          <span className="h-8 border border-[#697178] bg-[#525b62]" /><span className="flex-1" />
          <button aria-label="Scroll down" className="flex h-5 items-center justify-center border border-[#697178] bg-[#525b62]"><ChevronDown size={14} strokeWidth={2.5} /></button>
        </div>
      </div>
    </section>
  );
}

function PlaylistBar() {
  return (
    <div className="flex h-[25px] shrink-0 items-center border-t border-[#2a3339] bg-[#434b52] pl-[10px] text-[#dde5e9]">
      <Tri />
      <Magnet size={15} strokeWidth={3} className="ml-2 rotate-[-45deg]" />
      <div className="ml-[18px] flex items-center gap-[5px]">
        <svg viewBox="0 0 16 16" className="size-4" fill="none" stroke="currentColor" strokeWidth="1.400"><path d="M1.500 5V1.500H6l8.500 8.500-1 4-4 .500z" /><path d="M3.500 6.500l7.500 7.500M6 4l7.500 7.500M1.500 5l2 1.500L6 4" /></svg>
        <svg viewBox="0 0 16 16" className="size-4 text-[#7cc8f5]" fill="currentColor"><path d="M2 5l5-5 2 4 3 3-2 4-5 3-4 1 2-4zM10 10l4 5 2-1-4-5z" /><path d="M6 3l6 5M1 8l8 4" stroke="#434b52" /></svg>
        <Ban size={16} className="rotate-90" /><VolumeX size={16} fill="currentColor" /><MoveHorizontal size={16} strokeWidth={3} />
        <svg viewBox="0 0 16 16" className="size-4" fill="currentColor"><path d="M0 2l8 11V2zM10 2h3l2 3v8l-5-2z" /></svg>
        <Maximize size={16} /><Search size={16} /><Volume2 size={16} fill="currentColor" />
      </div>
      <svg viewBox="0 0 14 12" className="ml-4 h-3 w-[14px]" fill="none" stroke="currentColor" strokeWidth="1.500"><path d="M1 4h3l4-3v10L4 8H1z" /><path d="M10 3l4 3-4 3z" fill="currentColor" stroke="none" /></svg>
      <h1 className="ml-2 flex items-center gap-[5px] text-[13px]">Playlist - Arrangement<Tri className="text-[#899196]" />drum - Volume<Tri className="text-[#899196]" /></h1>
      <div className="flex-1" />
      <div className="flex items-center gap-[10px] pr-2"><span className="mb-1 h-[2px] w-[7px] bg-current" /><Restore /><X size={13} strokeWidth={2.5} /></div>
    </div>
  );
}

/* ---------- taskbar ---------- */
const Chrome = ({ badge }: { badge?: boolean }) => (
  <svg viewBox="0 0 18 18" className="size-[17px]"><circle cx="9" cy="9" r="8.500" fill="#fff" /><path d="M9 9L1.600 4.800A8.500 8.500 0 0 1 16.700 5.300H9z" fill="#ea4335" /><path d="M9 9h0L5.700 11 1.600 4.700A8.500 8.500 0 0 0 8.500 17.500l3.800-6.500z" fill="#34a853" /><path d="M12.500 11L8.500 17.500A8.500 8.500 0 0 0 16.700 5.300H9z" fill="#fbbc05" /><circle cx="9" cy="9" r="4" fill="#4285f4" stroke="#fff" />{badge && <circle cx="13.500" cy="13.500" r="4.500" fill="#151515" />}</svg>
);
const Face = ({ hair, skin }: { hair: string; skin: string }) => (
  <svg viewBox="0 0 16 16" className="size-4"><path d="M1 8C0 2 5 0 8 0s8 2 7 8l-2 7H3z" fill={hair} /><circle cx="8.500" cy="9" r="4.500" fill={skin} /><path d="M4 8c1-4 7-4 9-1l-1-4-7 1z" fill={hair} /><path d="M6.500 9v1.500M10.500 9v1.500" stroke="#332" /></svg>
);
const Adobe = ({ t, fg, bg }: { t: string; fg: string; bg: string }) => <span className={`flex size-4 items-center justify-center border text-[9px] leading-none ${fg} ${bg}`}>{t}</span>;

const apps: { n: string; i: React.ReactNode; on?: boolean; cur?: boolean }[] = [
  { n: "File Explorer", on: true, i: <svg viewBox="0 0 16 14" className="h-[14px] w-4"><path d="M0 0h6l1 2h9v11H0z" fill="#f0b429" /><path d="M0 4h16v10H0z" fill="#ffd766" /><path d="M3 14V9h10v5h-3v-2H6v2z" fill="#3d9be0" /></svg> },
  { n: "Winamp", i: <svg viewBox="0 0 16 16" className="size-4"><path d="M9 0l6 2-3 4 3 1L7 14l-6 1 3-5-3-2z" fill="#151515" stroke="#f4f4f4" strokeWidth=".7" /><path d="M10 1L3 8h4l-2 5 8-6H9l3-5z" fill="#f59b23" /></svg> },
  { n: "Chrome", i: <Chrome /> },
  { n: "Opera", i: <FaOpera size={16} className="text-[#f5192e]" /> },
  { n: "Steam", i: <FaSteam size={16} className="rounded-full bg-[#12579b] text-white" /> },
  { n: "Lime", i: <svg viewBox="0 0 16 16" className="size-4"><circle cx="8" cy="7.500" r="7" fill="#7fa83d" /><circle cx="8" cy="7" r="5.500" fill="#c5dc85" /><path d="M8 2v10M3 7h10M4 4l8 7M12 4l-8 7" stroke="#86a94a" /><path d="M2 11l12 1-1 2-8 1z" fill="#c99d68" /></svg> },
  { n: "WhatsApp", i: <span className="rounded-full bg-[#35c759] p-px text-white"><FaWhatsapp size={15} /></span> },
  { n: "Illustrator", i: <Adobe t="Ai" fg="border-[#ff7c00] text-[#ff9a00]" bg="bg-[#2b1400]" /> },
  { n: "After Effects", i: <Adobe t="Ae" fg="border-[#b98cf5] text-[#cf96fd]" bg="bg-[#1f0a3d]" /> },
  { n: "After Effects 2", i: <Adobe t="Ae" fg="border-[#00005b] font-bold text-[#9f9fff]" bg="bg-[#00005b]" /> },
  { n: "Photoshop", i: <Adobe t="Ps" fg="border-[#00c8ff] text-[#00c8ff]" bg="bg-[#001d26]" /> },
  { n: "FL Studio", cur: true, i: <svg viewBox="0 0 16 16" className="size-4"><circle cx="8" cy="8" r="7.500" fill="#43474b" /><path d="M4 6c2-3 6-3 7 0 1 3-1 7-3 9-3-2-5-6-4-9z" fill="#f58a1f" /><path d="M6 6c1-1 3-1 3 1L8 11z" fill="#ffd04a" /><path d="M7 4l1-3 1 2 3-1-2 3z" fill="#7fc043" /></svg> },
  { n: "Visual Studio", i: <svg viewBox="0 0 16 16" className="size-4"><path d="M11 0l5 2v12l-5 2-6-6-3.500 3L0 12V4l1.500-1L5 6z" fill="#a27be8" /><path d="M11 5v6L7.500 8zM1.500 6v4L3.500 8z" fill="#40403e" /></svg> },
  { n: "VS Code", on: true, i: <svg viewBox="0 0 16 16" className="size-4"><path d="M11.500 0L16 2v12l-4.500 2L4.500 9.500 1.500 12 0 11l3-3-3-3 1.500-1 3 2.500z" fill="#2c9fe8" /><path d="M12 4.500v7L7.500 8z" fill="#40403e" /></svg> },
  { n: "Game 1", i: <Face hair="#8a88b8" skin="#e9b48f" /> },
  { n: "Game 2", i: <Face hair="#e0a63a" skin="#f0b884" /> },
  { n: "osu!", i: <span className="flex size-4 items-center justify-center rounded-full border border-white bg-[#ff66aa] text-[6px] font-bold leading-none text-white">osu!</span> },
  { n: "Game 3", i: <Face hair="#4b5547" skin="#d9cabf" /> },
  { n: "Game 4", i: <Face hair="#5b4a48" skin="#e3b7a8" /> },
  { n: "Chrome profile", on: true, i: <Chrome badge /> },
];

function Taskbar() {
  return (
    <footer className="flex h-[30px] shrink-0 items-stretch bg-[#41403f] text-white">
      <button aria-label="Start" className="flex w-9 items-center justify-center"><FaWindows size={16} /></button>
      <label className="flex w-[258px] shrink-0 items-center overflow-hidden border border-[#6b6b69] bg-[#2f2f2e] pl-3">
        <Search size={16} strokeWidth={1.5} className="-scale-x-100" />
        <input placeholder="Search" aria-label="Search" className="ml-3 w-0 flex-1 bg-transparent text-[14px] placeholder-[#e2e2e2] outline-none" />
        <svg viewBox="0 0 58 28" className="h-7 w-[58px]" aria-hidden="true"><path d="M0 28C6 20 30 18 58 22v6z" fill="#d9c49c" /><path d="M26 20C36 8 50 6 58 6v16z" fill="#a9c957" /><path d="M34 24c4-8 12-14 24-15M42 24c3-5 8-9 16-10" stroke="#527a25" strokeWidth="2" fill="none" /><path d="M9 7h5v8H9z" fill="#46a6cf" /><circle cx="11" cy="4" r="2.500" fill="#8a5a3c" /><path d="M10 15l-3 9M13 15l1 8" stroke="#7b4a31" strokeWidth="2" /><circle cx="29" cy="7" r="4" fill="#8066c9" /><circle cx="27" cy="9" r="2.500" fill="#b36338" /><path d="M24 12h7l1 8-7 1z" fill="#f47a43" /><path d="M26 20l-4 4M31 20l3 8" stroke="#b36338" strokeWidth="2.500" /></svg>
      </label>
      <div className="ml-[4px] flex w-[728px] shrink-0">
        {apps.map((a) => (
          <button key={a.n} aria-label={a.n} className={`relative flex flex-1 items-center justify-center ${a.cur ? "bg-[#6b6b69]" : ""}`}>
            {a.i}{(a.on || a.cur) && <span className={`absolute bottom-0 h-[2px] bg-[#76b9ed] ${a.cur ? "inset-x-0" : "inset-x-1"}`} />}
          </button>
        ))}
      </div>
      <div className="flex-1" />
      <div className="flex items-center gap-2 border-r border-[#6b6b69] pr-5 text-[12px]">
        <svg viewBox="0 0 24 16" className="h-4 w-6"><path d="M5 16a5 5 0 0 1 0-9 8 8 0 0 1 14-1 5 5 0 0 1 0 10z" fill="#a9c8f5" /><path d="M5 16a5 5 0 0 1-3-8c6 5 12 5 21 2a5 5 0 0 1-4 6z" fill="#7ea6e6" /></svg>
        <span className="mr-2">25°C</span>
        <ChevronUp size={16} />
        <svg viewBox="0 0 14 14" className="size-[14px]"><circle cx="7" cy="7" r="6" fill="none" stroke="#fff" strokeWidth="1.500" /><circle cx="7" cy="7" r="3" fill="#fff" /></svg>
        <Mic size={16} fill="currentColor" /><Volume2 size={18} strokeWidth={1.500} />
        <svg viewBox="0 0 14 14" className="size-[14px]" fill="none" stroke="#fff"><path d="M1 13A12 12 0 0 1 13 1M4 13a9 9 0 0 1 9-8M7.500 13A6 6 0 0 1 13 9" /><circle cx="12" cy="12" r="1" fill="#fff" /></svg>
        <svg viewBox="0 0 17 12" className="h-3 w-[17px]" fill="none" stroke="#fff"><path d="M7 3h8v7H4V8M16 5v3M1 2h5v3a2 2 0 0 1-5 0zM2 0v2M5 0v2" /></svg>
        <span className="ml-px mr-2">18:14</span>
        <svg viewBox="0 0 16 16" className="size-4"><path d="M0 0h16v13h-6l-2 3v-3H0z" fill="#fff" /><path d="M3 3.500h10M3 6.500h10M3 9.500h6" stroke="#41403f" /></svg>
      </div>
      <span className="w-1" />
    </footer>
  );
}

export default function App() {
  return (
    <div className="flex h-screen flex-col overflow-hidden bg-[#2a3339] font-['Noto_Sans','Open_Sans',sans-serif]">
      <TopBar />
      <main className="flex min-h-0 flex-1">
        <Browser />
        <div className="flex w-2 shrink-0 items-center justify-center border-x border-[#2d363c] bg-[#454e54]"><span className="h-5 border-l-2 border-dotted border-[#2b343a]" /></div>
        <div className="flex min-w-0 flex-1 flex-col">
          <PlaylistBar />
          <div className="flex min-h-0 flex-1"><Picker /><Playlist /></div>
        </div>
      </main>
      <Taskbar />
    </div>
  );
}
